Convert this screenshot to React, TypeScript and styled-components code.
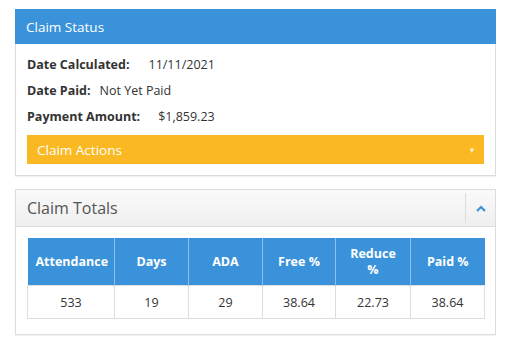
import React from 'react';
import styled, { createGlobalStyle } from 'styled-components';

const GlobalStyle = createGlobalStyle`
  body {
    margin: 0;
    background: #fff;
    font-family: "Open Sans", "Liberation Sans", sans-serif;
  }
`

const Page = styled.div`
  width: 509px;
  height: 351px;
  padding: 9px 13px 0 15px;
  box-sizing: border-box;
  display: flex;
  flex-direction: column;
  gap: 13px;
`

const Panel = styled.div`
  border: 1px solid #dcdcdc;
  background: #fff;
  box-shadow: 0 1px 1px rgba(0, 0, 0, 0.05);
`

const BlueHeader = styled.div`
  background: #3a93da;
  color: #fff;
  height: 35px;
  display: flex;
  align-items: center;
  padding: 0 11px;
  font-size: 13.5px;
  margin: -1px -1px 0;
`

const StatusBody = styled.div`
  padding: 7px 11px 11px;
  display: flex;
  flex-direction: column;
`

const InfoRow = styled.div<{ $gap: number }>`
  display: flex;
  align-items: center;
  height: 26px;
  font-size: 12.5px;
  color: #333;
  gap: ${(p) => p.$gap}px;
`

const Label = styled.span`
  font-weight: 700;
`

const ActionsBar = styled.div`
  margin-top: 6px;
  height: 29px;
  background: #fab923;
  color: #fff;
  display: flex;
  align-items: center;
  justify-content: space-between;
  padding: 0 8px 0 10px;
  font-size: 13.5px;
`

const Caret = styled.span`
  font-size: 8px;
  color: rgba(255, 255, 255, 0.75);
`

const GreyHeader = styled.div`
  height: 36px;
  display: flex;
  align-items: stretch;
  background: linear-gradient(#fafafa, #efefef);
  border-bottom: 1px solid #dcdcdc;
`

const GreyTitle = styled.div`
  flex: 1;
  display: flex;
  align-items: center;
  padding-left: 11px;
  font-size: 16px;
  color: #555;
`

const CollapseBtn = styled.div`
  width: 29px;
  margin: 3px 0;
  border-left: 1px solid #dcdcdc;
  display: flex;
  align-items: center;
  justify-content: center;
  color: #3a93da;
`

const TotalsBody = styled.div`
  padding: 11px 11px 15px;
`

const Table = styled.table`
  width: 100%;
  border-collapse: collapse;
  table-layout: fixed;
  font-size: 12.5px;
`

const Col = styled.col<{ $w: number }>`
  width: ${(p) => p.$w}px;
`

const Th = styled.th`
  background: #3a93da;
  color: #fff;
  font-weight: 700;
  height: 47px;
  padding: 0 8px;
  line-height: 16px;
  border-left: 1px solid #8fc0e8;
  &:first-child {
    border-left: none;
  }
`

const Td = styled.td`
  height: 32px;
  padding: 0;
  text-align: center;
  color: #333;
  border: 1px solid #dedede;
`

const columns = [
  { name: 'Attendance', w: 87, value: '533' },
  { name: 'Days', w: 74, value: '19' },
  { name: 'ADA', w: 74, value: '29' },
  { name: 'Free %', w: 73, value: '38.64' },
  { name: 'Reduce %', w: 75, value: '22.73' },
  { name: 'Paid %', w: 74, value: '38.64' },
]

const App: React.FC = () => {
  return (
    <>
      <GlobalStyle />
      <Page>
        <Panel>
          <BlueHeader>Claim Status</BlueHeader>
          <StatusBody>
            <InfoRow $gap={19}>
              <Label>Date Calculated:</Label>
              <span>11/11/2021</span>
            </InfoRow>
            <InfoRow $gap={9}>
              <Label>Date Paid:</Label>
              <span>Not Yet Paid</span>
            </InfoRow>
            <InfoRow $gap={18}>
              <Label>Payment Amount:</Label>
              <span>$1,859.23</span>
            </InfoRow>
            <ActionsBar>
              <span>Claim Actions</span>
              <Caret>▼</Caret>
            </ActionsBar>
          </StatusBody>
        </Panel>
        <Panel>
          <GreyHeader>
            <GreyTitle>Claim Totals</GreyTitle>
            <CollapseBtn>
              <svg width="10" height="7" viewBox="0 0 10 7">
                <path d="M1 6 L5 2 L9 6" fill="none" stroke="currentColor" strokeWidth="2.2" />
              </svg>
            </CollapseBtn>
          </GreyHeader>
          <TotalsBody>
            <Table>
              <colgroup>
                {columns.map((c) => (
                  <Col key={c.name} $w={c.w} />
                ))}
              </colgroup>
              <thead>
                <tr>
                  {columns.map((c) => (
                    <Th key={c.name}>{c.name}</Th>
                  ))}
                </tr>
              </thead>
              <tbody>
                <tr>
                  {columns.map((c) => (
                    <Td key={c.name}>{c.value}</Td>
                  ))}
                </tr>
              </tbody>
            </Table>
          </TotalsBody>
        </Panel>
      </Page>
    </>
  );
}

export default App;
